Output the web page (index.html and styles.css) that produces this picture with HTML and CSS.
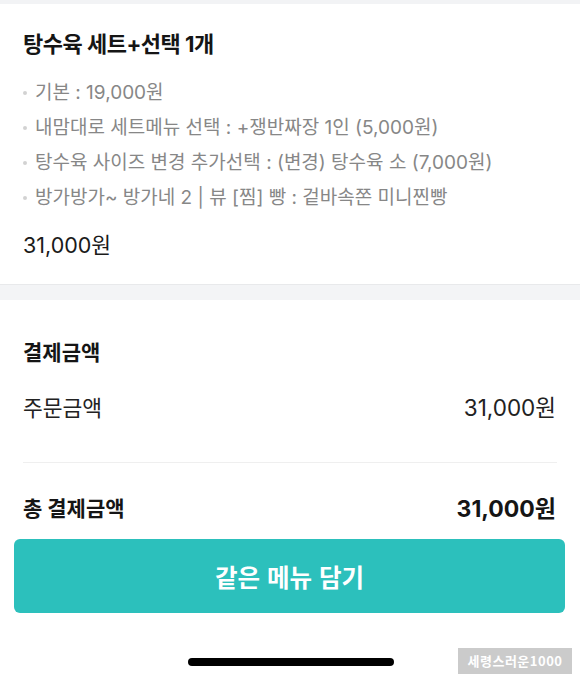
FILE: index.html
```html
<!DOCTYPE html>
<html lang="ko">
<head>
<meta charset="utf-8">
<link rel="stylesheet" href="styles.css">
</head>
<body>
<div class="page">
  <div class="strip"></div>
  <section class="card">
    <h1 class="title">탕수육 세트+선택 1개</h1>
    <ul class="opts">
      <li>기본 : 19,000원</li>
      <li>내맘대로 세트메뉴 선택 : +쟁반짜장 1인 (5,000원)</li>
      <li>탕수육 사이즈 변경 추가선택 : (변경) 탕수육 소 (7,000원)</li>
      <li>방가방가~ 방가네 2 | 뷰 [찜] 빵 : 겉바속쫀 미니찐빵</li>
    </ul>
    <div class="price">31,000원</div>
  </section>
  <div class="band"></div>
  <section class="pay">
    <h2 class="pay-title">결제금액</h2>
    <div class="row">
      <span>주문금액</span>
      <span class="amt">31,000원</span>
    </div>
    <div class="divider"></div>
    <div class="row total">
      <span>총 결제금액</span>
      <span class="total-amt">31,000원</span>
    </div>
  </section>
  <button class="cta">같은 메뉴 담기</button>
  <div class="home"><span class="bar"></span></div>
  <div class="mark">세령스러운1000</div>
</div>
</body>
</html>
```
FILE: styles.css
```css
* { box-sizing: border-box; }
html, body { margin: 0; padding: 0; background: #fff; }
body {
  font-family: "Inter", "Noto Sans CJK KR", sans-serif;
  color: #1a1a1a;
}
.page {
  position: relative;
  width: 580px;
  height: 679px;
  overflow: hidden;
  display: flex;
  flex-direction: column;
}
.strip { height: 4px; background: #f2f3f5; }
.card { padding: 24px 23px 24px; }
.title {
  margin: 0;
  font-size: 22px;
  line-height: 32px;
  font-weight: 700;
  color: #151515;
  letter-spacing: -0.5px;
}
.opts {
  list-style: none;
  margin: 15px 0 0;
  padding: 0;
}
.opts li {
  position: relative;
  padding-left: 12px;
  font-size: 19px;
  line-height: 35px;
  color: #878787;
}
.opts li::before {
  content: "";
  position: absolute;
  left: 0;
  top: 16px;
  width: 4px;
  height: 4px;
  border-radius: 50%;
  background: #d2d2d2;
}
.price {
  margin-top: 15px;
  font-size: 21.5px;
  line-height: 30px;
  color: #1a1a1a;
}
.band {
  height: 16px;
  background: #f3f4f6;
  border-top: 1px solid #e8e9eb;
}
.pay { padding: 38px 23px 0; }
.pay-title {
  margin: 0;
  font-size: 21px;
  line-height: 30px;
  font-weight: 700;
  color: #151515;
}
.row {
  display: flex;
  justify-content: space-between;
  align-items: center;
  margin-top: 25px;
  padding-right: 1px;
  font-size: 21.5px;
  line-height: 30px;
  color: #222;
}
.amt { font-size: 22.5px; }
.divider {
  height: 1px;
  background: #efefef;
  margin-top: 39px;
}
.row.total {
  margin-top: 31px;
  font-size: 21px;
  font-weight: 700;
  color: #151515;
}
.total-amt { font-size: 23px; }
.cta {
  margin: 15px 15px 0 14px;
  height: 74px;
  border: 0;
  border-radius: 6px;
  background: #2cc0bc;
  color: #fff;
  font-family: "Noto Sans CJK KR", sans-serif;
  font-size: 24.5px;
  font-weight: 700;
}
.home {
  display: flex;
  justify-content: center;
  margin-top: 45px;
  padding-left: 1px;
}
.bar {
  width: 206px;
  height: 8px;
  border-radius: 4px;
  background: #000;
}
.mark {
  position: absolute;
  right: 8px;
  bottom: 5px;
  width: 114px;
  height: 26px;
  background: #cbcbcb;
  color: #fff;
  font-family: "Noto Sans CJK KR", sans-serif;
  font-size: 13px;
  font-weight: 700;
  line-height: 26px;
  text-align: center;
  letter-spacing: 0.5px;
}
```
